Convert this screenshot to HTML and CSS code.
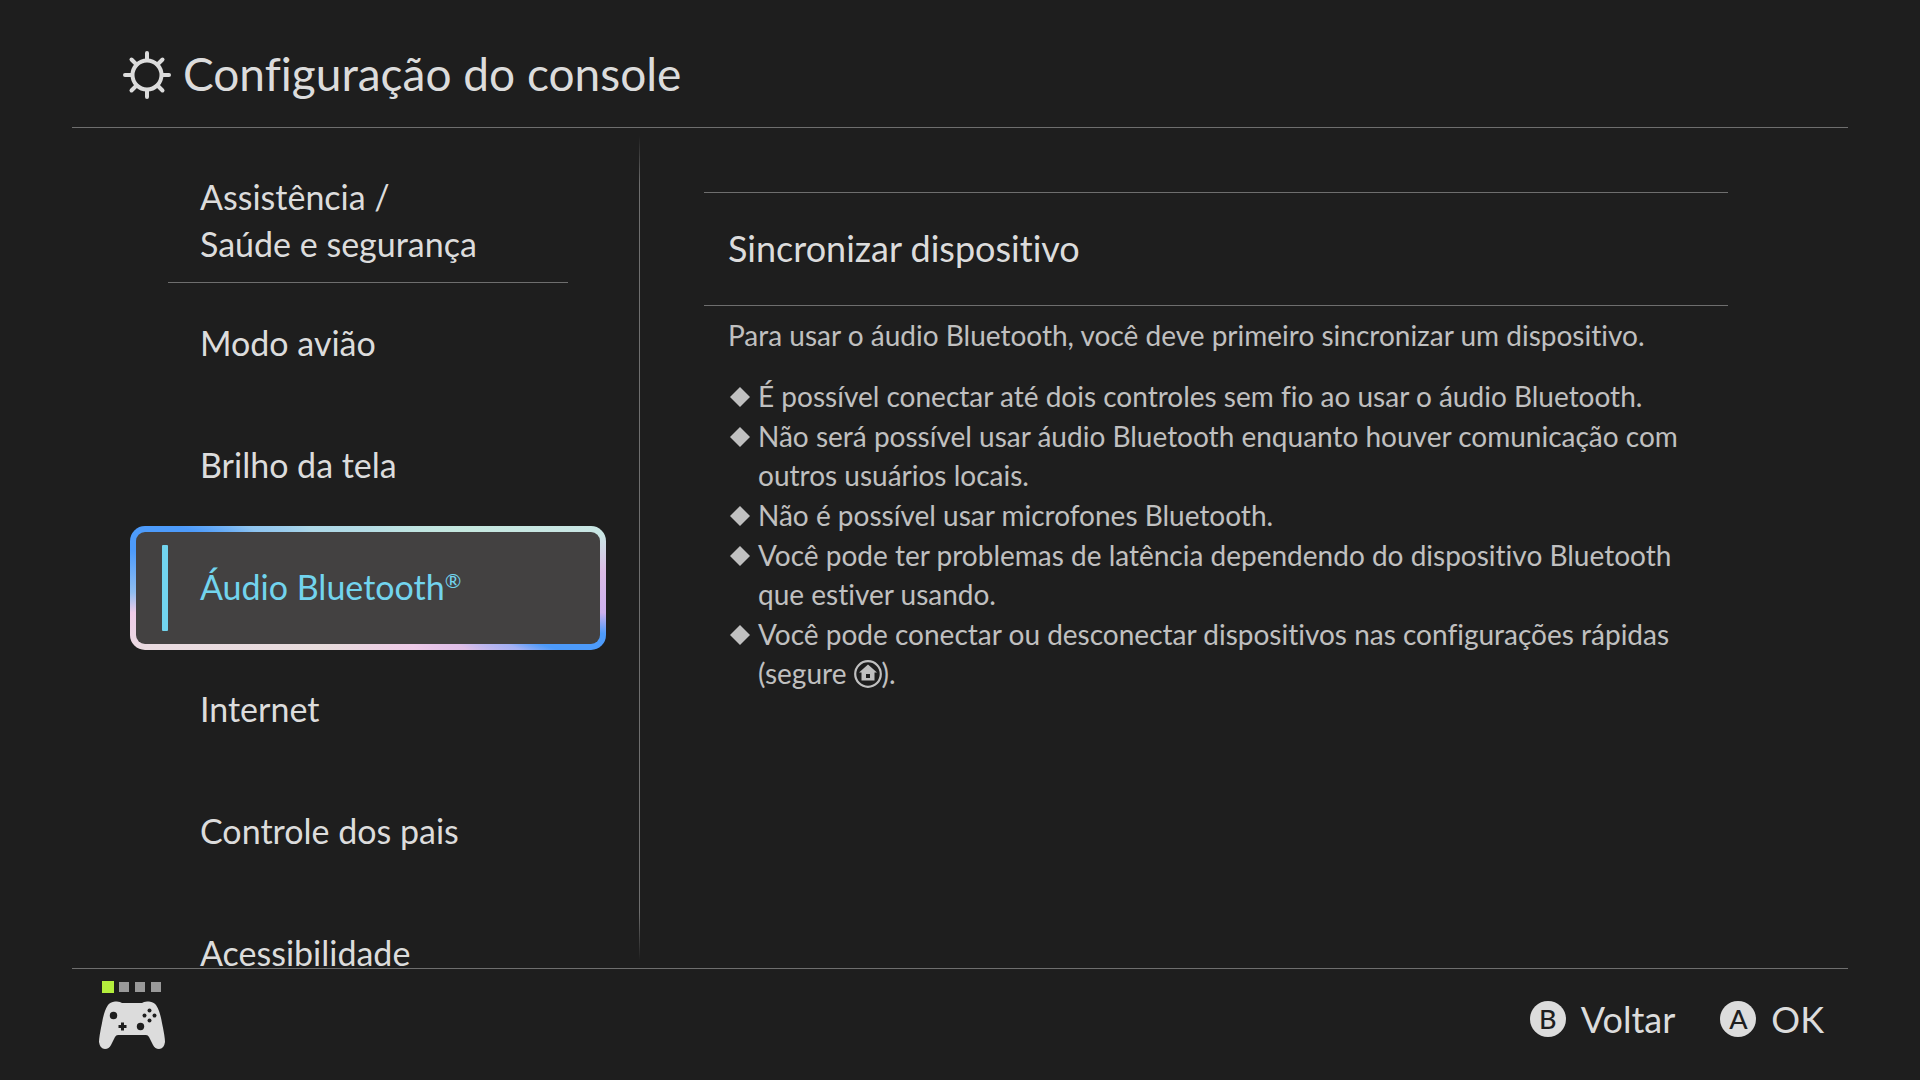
FILE: index.html
```html
<!DOCTYPE html>
<html lang="pt-BR">
<head>
<meta charset="utf-8">
<meta name="viewport" content="width=device-width, initial-scale=1">
<title>Configuração do console</title>
<link rel="stylesheet" href="styles.css">
</head>
<body>
<header class="header">
  <svg class="header-icon" viewBox="0 0 48 48" aria-hidden="true">
    <g fill="none" stroke="currentColor" stroke-width="4" stroke-linecap="round">
      <circle cx="24" cy="24" r="14.500"/>
      <path d="M24 2V9M24 39V46M2 24H9M39 24H46M8.500 8.500L13 13M39.500 8.500L35 13M8.500 39.500L13 35M39.500 39.500L35 35"/>
    </g>
  </svg>
  <h1 class="title">Configuração do console</h1>
</header>

<main class="main">
  <nav class="menu" aria-label="Configurações">
    <button class="menu-item menu-item-tall" type="button">Assistência /<br>Saúde e segurança</button>
    <hr class="menu-rule">
    <button class="menu-item" type="button">Modo avião</button>
    <button class="menu-item" type="button">Brilho da tela</button>
    <button class="menu-item selected" type="button" aria-current="page"><span>Áudio Bluetooth<sup class="mark">®</sup></span></button>
    <button class="menu-item" type="button">Internet</button>
    <button class="menu-item" type="button">Controle dos pais</button>
    <button class="menu-item" type="button">Acessibilidade</button>
  </nav>

  <section class="panel">
    <button class="action" type="button">Sincronizar dispositivo</button>
    <p class="lead">Para usar o áudio Bluetooth, você deve primeiro sincronizar um dispositivo.</p>
    <ul class="notes">
      <li>É possível conectar até dois controles sem fio ao usar o áudio Bluetooth.</li>
      <li>Não será possível usar áudio Bluetooth enquanto houver comunicação com<br>outros usuários locais.</li>
      <li>Não é possível usar microfones Bluetooth.</li>
      <li>Você pode ter problemas de latência dependendo do dispositivo Bluetooth<br>que estiver usando.</li>
      <li>Você pode conectar ou desconectar dispositivos nas configurações rápidas<br>(segure <svg class="home" viewBox="0 0 28 28" role="img" aria-label="HOME"><circle cx="14" cy="14" r="12.800" fill="none" stroke="currentColor" stroke-width="2.200"/><path fill="currentColor" fill-rule="evenodd" d="M14 4.500L23 12.500H20.500V20.500H7.500V12.500H5ZM12 14V18H16V14Z"/></svg>).</li>
    </ul>
  </section>
</main>

<footer class="footer">
  <div class="player">
    <div class="leds"><i class="led on"></i><i class="led"></i><i class="led"></i><i class="led"></i></div>
    <svg class="pad" viewBox="0 0 66 48" aria-hidden="true">
      <path fill="currentColor" d="M9 4Q11 1 16 .5Q21 0 23 2H43Q45 0 50 .5Q55 1 57 4Q61 10 63 22Q66 36 66 41Q65 48 60 48Q56 48 54 44L50 36Q49 34 47 34H19Q17 34 16 36L12 44Q10 48 6 48Q1 48 0 41Q0 36 3 22Q5 10 9 4Z"/>
      <g class="pad-keys">
        <circle cx="14.500" cy="14.500" r="3.700"/><circle cx="41.500" cy="25.500" r="3.700"/>
        <circle cx="50.500" cy="9.500" r="2"/><circle cx="50.500" cy="19.500" r="2"/><circle cx="45.500" cy="14.500" r="2"/><circle cx="55.500" cy="14.500" r="2"/>
        <path d="M22 21.500h3v2.500h2.500v3H25v2.500h-3V27h-2.500v-3H22Z"/>
      </g>
    </svg>
  </div>
  <div class="hints">
    <button class="hint" type="button"><span class="key">B</span>Voltar</button>
    <button class="hint" type="button"><span class="key">A</span>OK</button>
  </div>
</footer>
</body>
</html>
```
FILE: styles.css
```css
* { box-sizing: border-box; }

:root {
  --bg: #1e1e1e;
  --text: #dcdcdc;
  --muted: #c0c0c0;
  --line: #6e6e6e;
  --accent: #72d4ee;
}

body {
  margin: 0;
  padding: 0 72px;
  height: 100vh;
  display: flex;
  flex-direction: column;
  background: var(--bg);
  color: var(--text);
  font-family: Lato, "Noto Sans", sans-serif;
  font-variant-ligatures: none;
}

button {
  margin: 0;
  padding: 0;
  border: 0;
  background: none;
  color: inherit;
  font: inherit;
  font-variant-ligatures: none;
  text-align: left;
}

.header {
  flex: none;
  display: flex;
  align-items: center;
  gap: 12px;
  height: 128px;
  padding: 22px 51px 0;
  border-bottom: 1px solid var(--line);
}
.header-icon { width: 48px; height: 48px; }
.title { margin: 0; padding-bottom: 2px; font-size: 46px; font-weight: 400; line-height: 60px; }

.main {
  flex: 1;
  min-height: 0;
  display: flex;
  overflow: hidden;
}

.menu {
  position: relative;
  flex: 0 0 568px;
  padding: 45px 34px 0 58px;
  font-size: 34px;
  line-height: 47px;
}
.menu::after {
  content: "";
  position: absolute;
  top: 8px;
  right: 0;
  bottom: 8px;
  width: 1px;
  background: linear-gradient(transparent, var(--line) 48px calc(100% - 48px), transparent);
}
.menu-item {
  display: flex;
  align-items: center;
  width: 100%;
  height: 122px;
  padding: 0 0 3px 70px;
}
.menu-item-tall { height: 109px; align-items: flex-start; }
.menu-rule {
  height: 1px;
  margin: 0 38px;
  border: 0;
  background: var(--line);
}
.selected {
  position: relative;
  height: 124px;
  margin: -1px 0;
  padding-left: 64px;
  border: 6px solid transparent;
  border-radius: 15px;
  color: var(--accent);
  background:
    linear-gradient(#434141, #434141) padding-box,
    conic-gradient(#b5dde5 0deg, #c5e8df 60deg, #c9e6e4 77deg, #dcbce6 86deg,
      #cdb0ee 96deg, #4d9bfb 101deg, #4d9bfb 108deg, #a3b0f4 112deg,
      #e0bfe8 122deg, #efcbe8 142deg, #e8dcdc 219deg, #eadbe0 255deg,
      #efcbe8 264deg, #8fbdf0 269deg, #4d9bfb 279deg, #4d9bfb 288deg,
      #8fc5f0 297deg, #add8e8 316deg, #b5dde5 360deg) border-box;
}
.selected::before {
  content: "";
  position: absolute;
  left: 26px;
  top: 13px;
  bottom: 13px;
  width: 6px;
  border-radius: 1px;
  background: var(--accent);
}
.mark { font-size: 20px; line-height: 0; }

.panel {
  flex: 1;
  padding: 64px 120px 0 64px;
  font-size: 28px;
  line-height: 39px;
  color: var(--muted);
}
.action {
  display: block;
  width: 100%;
  height: 114px;
  padding: 0 0 2px 24px;
  border-top: 1px solid var(--line);
  border-bottom: 1px solid var(--line);
  color: var(--text);
  font-size: 36px;
}
.lead { margin: 10px 0 22px 24px; }
.notes {
  display: flex;
  flex-direction: column;
  gap: 1px;
  margin: 0 0 0 24px;
  padding: 0;
  list-style: none;
}
.notes li { position: relative; padding-left: 30px; }
.notes li::before {
  content: "";
  position: absolute;
  left: 2px;
  top: 10px;
  width: 20px;
  height: 20px;
  background: currentColor;
  clip-path: polygon(50% 0, 100% 50%, 50% 100%, 0 50%);
}
.home { width: 28px; height: 28px; vertical-align: -4px; }

.footer {
  flex: none;
  display: flex;
  justify-content: space-between;
  height: 112px;
  padding: 12px 24px 0 27px;
  border-top: 1px solid var(--line);
}
.leds { display: flex; align-items: center; gap: 6px; height: 12px; padding-left: 3px; }
.led { width: 10px; height: 10px; background: #999; }
.led.on { width: 12px; height: 12px; margin-right: -1px; background: #b4ee3c; }
.pad { display: block; width: 66px; height: 48px; margin-top: 8px; }
.pad-keys { fill: var(--bg); }

.hints { display: flex; gap: 45px; height: 76px; }
.hint { display: flex; align-items: center; gap: 15px; font-size: 36px; }
.key {
  display: grid;
  place-items: center;
  width: 36px;
  height: 36px;
  border-radius: 50%;
  background: var(--text);
  color: var(--bg);
  font-size: 27px;
  font-weight: 500;
  line-height: 36px;
}
```
